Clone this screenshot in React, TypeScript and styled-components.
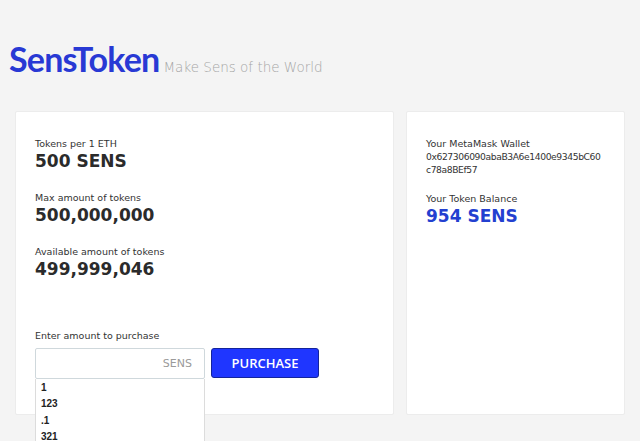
import React from 'react'
import styled, { createGlobalStyle } from 'styled-components'

const GlobalStyle = createGlobalStyle`
  html, body {
    margin: 0;
    padding: 0;
    background: #f4f4f4;
    font-family: 'DejaVu Sans', 'Open Sans', sans-serif;
    color: #2e2e2e;
  }
`

const Page = styled.div`
  width: 640px;
  height: 441px;
  overflow: hidden;
  padding: 0 15px 0 15px;
  box-sizing: border-box;
`

const Header = styled.header`
  display: flex;
  align-items: baseline;
  height: 111px;
  padding-top: 38px;
  margin-left: -6px;
  box-sizing: border-box;
`

const Logo = styled.h1`
  margin: 0;
  font-family: Lato, sans-serif;
  font-weight: 700;
  font-size: 34px;
  letter-spacing: -0.8px;
  color: #2839d4;
`

const Tagline = styled.span`
  margin-left: 4px;
  font-size: 13.5px;
  color: #a6a6a6;
  font-weight: 300;
`

const Cards = styled.div`
  display: flex;
  gap: 12px;
`

const Card = styled.section<{ $width: number }>`
  position: relative;
  width: ${p => p.$width}px;
  height: 304px;
  box-sizing: border-box;
  background: #fff;
  border: 1px solid #ececec;
  border-radius: 2px;
  padding: 26px 19px;
`

const Stat = styled.div<{ $gap?: number }>`
  margin-bottom: ${p => p.$gap ?? 20}px;
`

const Label = styled.div`
  font-size: 9.5px;
  line-height: 12px;
  color: #333;
`

const Value = styled.div<{ $blue?: boolean }>`
  font-size: 17px;
  line-height: 22px;
  font-weight: 700;
  color: ${p => (p.$blue ? '#2340d0' : '#2b2b2b')};
`

const Address = styled.div`
  font-size: 9.2px;
  letter-spacing: -0.4px;
  line-height: 13px;
  word-break: break-all;
  color: #333;
`

const PurchaseBlock = styled.div`
  position: absolute;
  left: 19px;
  top: 218px;
`

const Row = styled.div`
  display: flex;
  gap: 6px;
  margin-top: 6px;
`

const InputWrap = styled.div`
  position: relative;
`

const AmountInput = styled.div`
  width: 170px;
  height: 31px;
  box-sizing: border-box;
  border: 1px solid #cfd8dc;
  border-radius: 2px;
  display: flex;
  align-items: center;
  justify-content: flex-end;
  padding-right: 12px;
  font-size: 11px;
  color: #9a9a9a;
`

const Button = styled.button`
  width: 108px;
  height: 30px;
  background: #1f36ff;
  border: 1px solid #14249c;
  border-radius: 3px;
  color: #fff;
  font-family: 'Open Sans', sans-serif;
  font-weight: 600;
  font-size: 13px;
  cursor: pointer;
`

const Suggestions = styled.ul`
  position: absolute;
  top: 31px;
  left: 0;
  width: 170px;
  margin: 0;
  padding: 1px 0 0;
  list-style: none;
  background: #fff;
  border: 1px solid #dcdcdc;
  border-top: none;
  box-sizing: border-box;
  z-index: 2;
`

const Suggestion = styled.li`
  font-family: 'Liberation Sans', Arial, sans-serif;
  font-weight: 700;
  font-size: 10px;
  line-height: 16.4px;
  padding-left: 5px;
  color: #222;
`

const stats = [
  { label: 'Tokens per 1 ETH', value: '500 SENS' },
  { label: 'Max amount of tokens', value: '500,000,000' },
  { label: 'Available amount of tokens', value: '499,999,046' },
]

const App = () => (
  <Page>
    <GlobalStyle />
    <Header>
      <Logo>SensToken</Logo>
      <Tagline>Make Sens of the World</Tagline>
    </Header>
    <Cards>
      <Card $width={379}>
        {stats.map(s => (
          <Stat key={s.label}>
            <Label>{s.label}</Label>
            <Value>{s.value}</Value>
          </Stat>
        ))}
        <PurchaseBlock>
          <Label>Enter amount to purchase</Label>
          <Row>
            <InputWrap>
              <AmountInput>SENS</AmountInput>
              <Suggestions>
                {['1', '123', '.1', '321'].map(v => (
                  <Suggestion key={v}>{v}</Suggestion>
                ))}
              </Suggestions>
            </InputWrap>
            <Button>PURCHASE</Button>
          </Row>
        </PurchaseBlock>
      </Card>
      <Card $width={219}>
        <Stat $gap={17}>
          <Label>Your MetaMask Wallet</Label>
          <Address>0x627306090abaB3A6e1400e9345bC60c78a8BEf57</Address>
        </Stat>
        <Stat>
          <Label>Your Token Balance</Label>
          <Value $blue>954 SENS</Value>
        </Stat>
      </Card>
    </Cards>
  </Page>
)

export default App
